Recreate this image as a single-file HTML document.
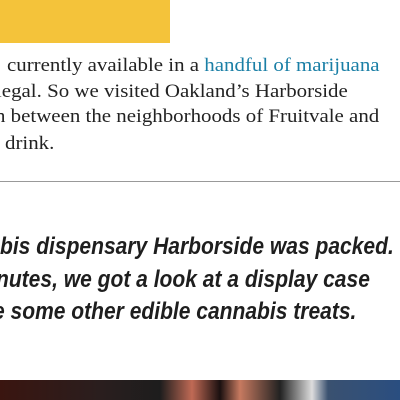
<!DOCTYPE html>
<html><head><meta charset="utf-8"><style>
html,body{margin:0;padding:0;width:400px;height:400px;overflow:hidden;background:#fff;position:relative}
.y{position:absolute;left:0;top:0;width:170px;height:43px;background:#f4c33a}
.s{position:absolute;white-space:nowrap;font-family:"Liberation Serif",serif;font-size:19px;color:#222;line-height:20px;transform:scaleX(1.1);transform-origin:0 0}
.s a{color:#1a7fa6;text-decoration:none}
.hr{position:absolute;left:0;top:181px;width:400px;height:1px;background:#999}
.i{position:absolute;white-space:nowrap;font-family:"Liberation Sans",sans-serif;font-style:italic;font-weight:bold;font-size:24px;color:#1e1e1e;line-height:28px;transform:scaleX(0.876);transform-origin:0 0}
.img{position:absolute;left:0;top:380px;width:400px;height:20px;background:linear-gradient(90deg,#3a1510 0%,#2a1e1e 25%,#1d1d1d 40%,#c06a55 48%,#1a1010 55%,#c77a60 60%,#222 70%,#ddd 78%,#3a5170 82%,#2a4e80 100%)}
</style></head><body>
<div class="y"></div>
<div class="s" style="left:7px;top:56px">currently available in a <a>handful of marijuana</a></div>
<div class="s" style="left:-4px;top:82px">legal. So we visited Oakland’s Harborside</div>
<div class="s" style="left:-5px;top:107px">n between the neighborhoods of Fruitvale and</div>
<div class="s" style="left:5px;top:134px">drink.</div>
<div class="hr"></div>
<div class="i" style="left:0px;top:233px">bis dispensary Harborside was packed.</div>
<div class="i" style="left:-4px;top:266px">nutes, we got a look at a display case</div>
<div class="i" style="left:-7px;top:298px">e some other edible cannabis treats.</div>
<div class="img"></div>
</body></html>
